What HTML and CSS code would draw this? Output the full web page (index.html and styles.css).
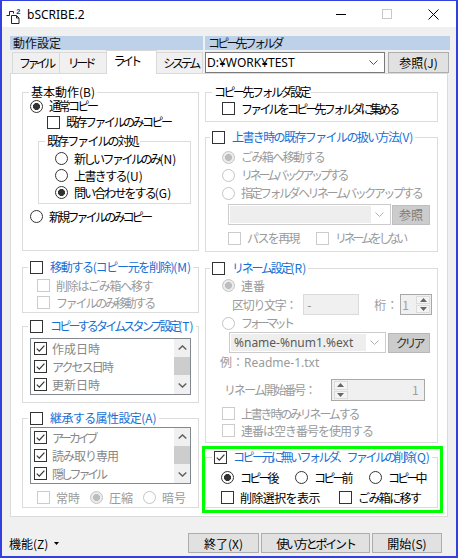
FILE: index.html
```html
<!DOCTYPE html>
<html lang="ja">
<head>
<meta charset="utf-8">
<title>bSCRIBE.2</title>
<link rel="stylesheet" href="styles.css">
</head>
<body>
<div class="window">
  <div class="titlebar">
    <svg class="appicon" width="16" height="17" viewBox="0 0 16 17">
      <path d="M0.5 8.5h3v-4h4v2" fill="none" stroke="#222" stroke-width="1"/>
      <path d="M5.5 8.5h5l2.5 2.5v5.5h-7.5z" fill="#fff" stroke="#222" stroke-width="1"/>
      <path d="M10.5 8.5v2.5h2.5" fill="none" stroke="#222" stroke-width="1"/>
      <text x="10.3" y="6.5" font-size="7.5" font-family="Liberation Sans" font-weight="bold" fill="#2323d8">2</text>
    </svg>
    <span class="title latin">bSCRIBE.2</span>
    <div class="winctl">
      <span class="wbtn"><svg width="10" height="10" viewBox="0 0 10 10"><path d="M0 5.5h10" stroke="#000"/></svg></span>
      <span class="wbtn"><svg width="10" height="10" viewBox="0 0 10 10"><rect x="0.5" y="0.5" width="9" height="9" fill="none" stroke="#c8c8c8"/></svg></span>
      <span class="wbtn"><svg width="11" height="11" viewBox="0 0 11 11"><path d="M0.5 0.5l10 10M10.5 0.5l-10 10" stroke="#000"/></svg></span>
    </div>
  </div>

  <div class="client">
    <div class="topgrid">
      <div class="hdr">動作設定</div>
      <div class="hdr s28">コピー先フォルダ</div>
      <div class="tabs">
        <span class="tab tab-file s36">ファイル</span>
        <span class="tab tab-read s36">リード</span>
        <span class="tab tab-write sel s36">ライト</span>
        <span class="tab tab-sys s32">システム</span>
      </div>
      <div class="dest">
        <div class="combo dest-combo"><span class="combo-text latin">D:¥WORK¥TEST</span><svg class="chev" width="9" height="5" viewBox="0 0 9 5"><path d="M0.5 0.5L4.5 4.5L8.5 0.5" fill="none" stroke="#555"/></svg></div>
        <span class="btn ref-btn">参照(J)</span>
      </div>
    </div>

    <div class="panel">
      <!-- LEFT COLUMN -->
      <div class="col col-left">
        <div class="grp g-basic">
          <div class="legend lg-text">基本動作(B)</div>
          <div class="row h14 mt6 ml7"><span class="rb on"></span><span class="s25">通常コピー</span></div>
          <div class="row h16 mt1 ml24"><span class="cb"></span><span class="s25">既存ファイルのみコピー</span></div>
          <div class="grp g-exist">
            <div class="legend lg-text"><span class="s19">既存ファイルの対処</span></div>
            <div class="row h17 mt8 ml16"><span class="rb"></span><span class="s25">新しいファイルのみ<span class="mn">(N)</span></span></div>
            <div class="row h17 ml16"><span class="rb"></span><span class="s16">上書きする<span class="mn">(U)</span></span></div>
            <div class="row h17 ml16"><span class="rb on"></span><span class="s19">問い合わせをする<span class="mn">(G)</span></span></div>
          </div>
          <div class="row h17 mt4 ml7"><span class="rb"></span><span class="s28">新規ファイルのみコピー</span></div>
        </div>

        <div class="grp g-move">
          <div class="legend lg-check"><span class="cb"></span><span class="blue s13">移動する(コピー元を削除)<span class="mn">(M)</span></span></div>
          <div class="row h17 mt9 ml14 dis"><span class="cb dis"></span><span class="s13">削除はごみ箱へ移す</span></div>
          <div class="row h17 ml14 dis"><span class="cb dis"></span><span class="s22">ファイルのみ移動する</span></div>
        </div>

        <div class="grp g-stamp">
          <div class="legend lg-check"><span class="cb"></span><span class="blue s28">コピーするタイムスタンプ設定<span class="mn">(T)</span></span></div>
          <div class="listbox lb-stamp">
            <div class="items">
              <div class="item"><span class="cb on"><svg width="11" height="11" viewBox="0 0 11 11"><path d="M1.8 5.6L4.3 8.1L9.4 2.6" fill="none" stroke="#333" stroke-width="1.2"/></svg></span><span>作成日時</span></div>
              <div class="item"><span class="cb on"><svg width="11" height="11" viewBox="0 0 11 11"><path d="M1.8 5.6L4.3 8.1L9.4 2.6" fill="none" stroke="#333" stroke-width="1.2"/></svg></span><span class="s19">アクセス日時</span></div>
              <div class="item"><span class="cb on"><svg width="11" height="11" viewBox="0 0 11 11"><path d="M1.8 5.6L4.3 8.1L9.4 2.6" fill="none" stroke="#333" stroke-width="1.2"/></svg></span><span>更新日時</span></div>
            </div>
            <div class="vscroll">
              <span class="sarrow"><svg width="9" height="5" viewBox="0 0 9 5"><path d="M0.7 4.5L4.5 0.9L8.3 4.5" fill="none" stroke="#606060" stroke-width="1.4"/></svg></span>
              <span class="track"><span class="thumb"></span></span>
              <span class="sarrow"><svg width="9" height="5" viewBox="0 0 9 5"><path d="M0.7 0.5L4.5 4.1L8.3 0.5" fill="none" stroke="#606060" stroke-width="1.4"/></svg></span>
            </div>
          </div>
        </div>

        <div class="grp g-attr">
          <div class="legend lg-check"><span class="cb"></span><span class="blue s06">継承する属性設定<span class="mn">(A)</span></span></div>
          <div class="listbox lb-attr">
            <div class="items">
              <div class="item"><span class="cb on"><svg width="11" height="11" viewBox="0 0 11 11"><path d="M1.8 5.6L4.3 8.1L9.4 2.6" fill="none" stroke="#333" stroke-width="1.2"/></svg></span><span class="s32">アーカイブ</span></div>
              <div class="item"><span class="cb on"><svg width="11" height="11" viewBox="0 0 11 11"><path d="M1.8 5.6L4.3 8.1L9.4 2.6" fill="none" stroke="#333" stroke-width="1.2"/></svg></span><span class="s10">読み取り専用</span></div>
              <div class="item"><span class="cb on"><svg width="11" height="11" viewBox="0 0 11 11"><path d="M1.8 5.6L4.3 8.1L9.4 2.6" fill="none" stroke="#333" stroke-width="1.2"/></svg></span><span class="s32">隠しファイル</span></div>
            </div>
            <div class="vscroll">
              <span class="sarrow"><svg width="9" height="5" viewBox="0 0 9 5"><path d="M0.7 4.5L4.5 0.9L8.3 4.5" fill="none" stroke="#606060" stroke-width="1.4"/></svg></span>
              <span class="track"><span class="thumb"></span></span>
              <span class="sarrow"><svg width="9" height="5" viewBox="0 0 9 5"><path d="M0.7 0.5L4.5 4.1L8.3 0.5" fill="none" stroke="#606060" stroke-width="1.4"/></svg></span>
            </div>
          </div>
          <div class="row h17 mt5 ml14 dis attr-opts">
            <span class="opt opt-always"><span class="cb dis"></span><span>常時</span></span>
            <span class="opt opt-comp"><span class="rb dis on"></span><span>圧縮</span></span>
            <span class="opt"><span class="rb dis"></span><span>暗号</span></span>
          </div>
        </div>
      </div>

      <!-- RIGHT COLUMN -->
      <div class="col col-right">
        <div class="grp g-dest">
          <div class="legend lg-text"><span class="s25">コピー先フォルダ設定</span></div>
          <div class="row h17 mt7 ml16"><span class="cb"></span><span class="s28">ファイルをコピー先フォルダに集める</span></div>
        </div>

        <div class="grp g-over">
          <div class="legend lg-check2"><span class="cb"></span><span class="blue s16">上書き時の既存ファイルの扱い方法<span class="mn">(V)</span></span></div>
          <div class="row h18 mt10 ml16 dis"><span class="rb dis on"></span><span class="s16">ごみ箱へ移動する</span></div>
          <div class="row h18 ml16 dis"><span class="rb dis"></span><span class="s32">リネームバックアップする</span></div>
          <div class="row h18 ml16 dis"><span class="rb dis"></span><span class="s25">指定フォルダヘリネームバックアップする</span></div>
          <div class="row h21 mt2 ml22 gap1">
            <div class="combo dis bk-combo"><span class="combo-field"></span><svg class="chev" width="9" height="5" viewBox="0 0 9 5"><path d="M0.5 0.5L4.5 4.5L8.5 0.5" fill="none" stroke="#b0b0b0"/></svg></div>
            <span class="btn dis bk-btn">参照</span>
          </div>
          <div class="row h16 mt5 ml22 dis">
            <span class="opt opt-path"><span class="cb dis"></span><span class="s16">パスを再現</span></span>
            <span class="opt"><span class="cb dis"></span><span class="s32">リネームをしない</span></span>
          </div>
        </div>

        <div class="grp g-rename">
          <div class="legend lg-check2"><span class="cb"></span><span class="blue s22">リネーム設定<span class="mn">(R)</span></span></div>
          <div class="row h17 mt8 ml16 dis"><span class="rb dis on"></span><span>連番</span></div>
          <div class="row h21 ml26 dis sep-row">
            <span class="lbl-sep s13">区切り文字：</span>
            <span class="field sep-field">-</span>
            <span class="lbl-digit">桁：</span>
            <span class="spin digit-spin"><span class="spin-val">1</span><span class="spin-btns"><span class="sb"><svg width="7" height="4" viewBox="0 0 7 4"><path d="M0 4L3.5 0L7 4z" fill="#666"/></svg></span><span class="sb"><svg width="7" height="4" viewBox="0 0 7 4"><path d="M0 0L3.5 4L7 0z" fill="#666"/></svg></span></span></span>
          </div>
          <div class="row h16 ml16 dis"><span class="rb dis"></span><span class="s36">フォーマット</span></div>
          <div class="row h21 mt1 ml23 gap2">
            <div class="combo dis fmt-combo"><span class="combo-field fmt-text latin">%name-%num1.%ext</span><svg class="chev" width="9" height="5" viewBox="0 0 9 5"><path d="M0.5 0.5L4.5 4.5L8.5 0.5" fill="none" stroke="#b0b0b0"/></svg></div>
            <span class="btn dis clear-btn s32">クリア</span>
          </div>
          <div class="row h16 mt1 ml14 dis"><span>例：<span class="latin">Readme-1.txt</span></span></div>
          <div class="row h22 mt9 ml18 dis">
            <span class="lbl-start s19">リネーム開始番号：</span>
            <span class="spin start-spin"><span class="spin-btns"><span class="sb"><svg width="7" height="4" viewBox="0 0 7 4"><path d="M0 4L3.5 0L7 4z" fill="#666"/></svg></span><span class="sb"><svg width="7" height="4" viewBox="0 0 7 4"><path d="M0 0L3.5 4L7 0z" fill="#666"/></svg></span></span><span class="spin-val right">1</span></span>
          </div>
          <div class="row h17 mt4 ml16 dis"><span class="cb dis"></span><span class="s22">上書き時のみリネームする</span></div>
          <div class="row h17 ml16 dis"><span class="cb dis"></span><span class="s10">連番は空き番号を使用する</span></div>
        </div>

        <div class="highlight">
          <div class="grp g-del">
            <div class="legend lg-text-check"><span class="cb on"><svg width="11" height="11" viewBox="0 0 11 11"><path d="M1.8 5.6L4.3 8.1L9.4 2.6" fill="none" stroke="#333" stroke-width="1.2"/></svg></span><span class="blue s25">コピー元に無いフォルダ、ファイルの削除<span class="mn">(Q)</span></span></div>
            <div class="row h17 mt11 ml15">
              <span class="opt opt-after"><span class="rb on"></span><span class="s28">コピー後</span></span>
              <span class="opt opt-before"><span class="rb"></span><span class="s28">コピー前</span></span>
              <span class="opt"><span class="rb"></span><span class="s28">コピー中</span></span>
            </div>
            <div class="row h17 mt3 ml15">
              <span class="opt opt-show"><span class="cb"></span><span class="s06">削除選択を表示</span></span>
              <span class="opt"><span class="cb"></span><span class="s16">ごみ箱に移す</span></span>
            </div>
          </div>
        </div>
      </div>
    </div>

    <div class="footer">
      <span class="func">機能(Z)<svg class="func-tri" width="5" height="3" viewBox="0 0 5 3"><path d="M0 0h5L2.5 3z" fill="#000"/></svg></span>
      <div class="buttons">
        <span class="btn fbtn b-end">終了(X)</span>
        <span class="btn fbtn b-help s22">使い方とポイント</span>
        <span class="btn fbtn b-start">開始(S)</span>
      </div>
    </div>
  </div>
</div>
</body>
</html>
```
FILE: styles.css
```css
* { box-sizing: border-box; }
html, body { margin: 0; padding: 0; }
body {
  width: 458px; height: 558px; overflow: hidden;
  font-family: "Noto Sans CJK JP", "Noto Sans", sans-serif;
  font-size: 12px; color: #000;
  background: #fff;
}
/* per-label tracking to mimic the narrow UI kana */
.s06 { letter-spacing: -0.6px; }
.s10 { letter-spacing: -1px; }
.s13 { letter-spacing: -1.3px; }
.s16 { letter-spacing: -1.6px; }
.s19 { letter-spacing: -1.9px; }
.s22 { letter-spacing: -2.2px; }
.s25 { letter-spacing: -2.5px; }
.s28 { letter-spacing: -2.8px; }
.s32 { letter-spacing: -3.2px; }
.s36 { letter-spacing: -3.6px; }
.mn { letter-spacing: 0; }
.latin { font-family: "Noto Sans", "Noto Sans CJK JP", sans-serif; letter-spacing: 0; }

.window {
  width: 458px; height: 558px;
  border: 2px solid #3340dd; border-top-width: 1px;
  background: #f0f0f0;
  display: flex; flex-direction: column;
}
.titlebar { height: 26px; flex: none; background: #fff; display: flex; align-items: center; }
.appicon { margin-left: 4px; margin-top: 2px; flex: none; }
.title { margin-left: 5px; font-size: 12px; }
.winctl { margin-left: auto; display: flex; height: 26px; }
.wbtn { width: 46px; height: 26px; display: flex; align-items: center; justify-content: center; }

.client { flex: 1; padding-top: 9px; display: flex; flex-direction: column; }
.topgrid {
  margin-left: 8px;
  display: grid; grid-template-columns: 193px 245px; column-gap: 2px;
  grid-template-rows: 14px 23px;
}
.hdr { background: #bdd1e9; line-height: 14px; height: 14px; padding-left: 3px; white-space: nowrap; color: #111; }
.tabs { display: flex; align-items: flex-end; padding-left: 2px; }
.tab {
  height: 21px; border: 1px solid #d9d9d9; border-bottom: none;
  background: #f0f0f0; line-height: 19px; padding-left: 6px; white-space: nowrap;
  margin-left: -1px; overflow: hidden;
}
.tab-file { width: 48px; margin-left: 0; }
.tab-read { width: 48px; padding-left: 8px; }
.tab-write { width: 52px; }
.tab-sys { width: 47px; padding-left: 6px; }
.tab.sel {
  height: 24px; margin-bottom: -1px; background: #fff; position: relative; z-index: 1;
  line-height: 20px; padding-left: 7px;
}
.dest { display: flex; align-items: flex-start; padding-top: 2px; }
.combo { display: flex; align-items: center; background: #fff; border: 1px solid #7a7a7a; }
.dest-combo { width: 180px; height: 21px; }
.combo-text { flex: 1; padding-left: 1px; white-space: nowrap; line-height: 19px; }
.combo .chev { margin: 0 6px 0 4px; flex: none; }
.btn {
  display: flex; align-items: center; justify-content: center;
  background: #e1e1e1; border: 1px solid #adadad; white-space: nowrap;
}
.ref-btn { width: 61px; height: 21px; margin-left: 3px; }

.panel {
  margin-left: 8px;
  width: 438px; height: 444px; flex: none;
  background: #fff; border: 1px solid #dadada;
  display: flex; gap: 6px;
  padding: 10px 0 0 11px;
}
.col { display: flex; flex-direction: column; }
.col-left { width: 177px; }
.col-right { width: 233px; }

.grp { border: 1px solid #dcdcdc; display: flex; flex-direction: column; flex: none; }
.legend {
  display: flex; align-items: center; gap: 6px;
  height: 14px; line-height: 14px; width: max-content;
  margin-top: -8px; margin-bottom: -6px;
  padding: 0 2px; background: #fff; white-space: nowrap;
}
.lg-text { margin-left: 6px; }
.lg-check { margin-left: 5px; gap: 7px; }
.lg-check2 { margin-left: 4px; gap: 7px; }
.lg-text-check { margin-left: 6px; gap: 6px; }
.blue { color: #1570d4; }

.g-basic { margin-top: 8px; height: 159px; }
.g-exist { margin: 11px 0 0 15px; width: 153px; height: 63px; }
.g-move { margin-top: 16px; height: 46px; }
.g-stamp { margin-top: 13px; height: 77px; }
.g-attr { margin-top: 15px; height: 90px; }
.lb-stamp { margin-top: 11px; }
.lb-attr { margin-top: 8px; }

.g-dest { margin-top: 8px; height: 30px; }
.g-over { margin-top: 15px; height: 115px; }
.g-rename { margin-top: 16px; height: 175px; }
.highlight {
  margin: 3px 0 0 -3px; width: 241px; height: 67px;
  border: 3px solid #00ff00; flex: none;
}
.g-del { margin-top: 8px; width: 233px; height: 51px; }

.row { display: flex; align-items: center; gap: 6px; white-space: nowrap; line-height: 14px; flex: none; }
.h14 { height: 14px; } .h16 { height: 16px; } .h17 { height: 17px; } .h18 { height: 18px; }
.h21 { height: 21px; } .h22 { height: 22px; }
.mt1 { margin-top: 1px; } .mt2 { margin-top: 2px; } .mt3 { margin-top: 3px; } .mt4 { margin-top: 4px; }
.mt5 { margin-top: 5px; } .mt6 { margin-top: 6px; } .mt7 { margin-top: 7px; } .mt8 { margin-top: 8px; } .mt9 { margin-top: 9px; }
.mt10 { margin-top: 10px; } .mt11 { margin-top: 11px; }
.ml7 { margin-left: 7px; } .ml14 { margin-left: 14px; } .ml15 { margin-left: 15px; } .ml16 { margin-left: 16px; }
.ml18 { margin-left: 18px; } .ml22 { margin-left: 22px; } .ml23 { margin-left: 23px; } .ml24 { margin-left: 24px; }
.ml26 { margin-left: 26px; }
.gap1 { gap: 1px; } .gap2 { gap: 2px; }
.dis { color: #9a9a9a; }

.opt { display: flex; align-items: center; gap: 6px; flex: none; }
.attr-opts { gap: 0; }
.opt-always { width: 53px; }
.opt-comp { width: 53px; }
.opt-path { width: 82px; }
.opt-after { width: 68px; }
.opt-before { width: 68px; }
.opt-show { width: 112px; }

.cb {
  width: 13px; height: 13px; flex: none;
  border: 1px solid #333; background: #fff;
  display: flex; align-items: center; justify-content: center;
}
.cb.dis { border-color: #cccccc; }
.rb {
  width: 13px; height: 13px; flex: none; border-radius: 50%;
  border: 1px solid #333; background: #fff;
}
.rb.on { background: radial-gradient(circle, #333 0 3.2px, #fff 3.8px); }
.rb.dis { border-color: #c4c4c4; }
.rb.dis.on { background: radial-gradient(circle, #bdbdbd 0 3.2px, #ececec 3.8px); }

.listbox {
  display: flex; width: 161px; height: 57px; margin-left: 7px; flex: none;
  border: 1px solid #828790; background: #fff;
}
.items { flex: 1; padding-left: 3px; }
.item { height: 18px; display: flex; align-items: center; gap: 5px; color: #878787; white-space: nowrap; }
.vscroll { width: 16px; background: #f0f0f0; display: flex; flex-direction: column; }
.sarrow { height: 17px; display: flex; align-items: center; justify-content: center; flex: none; }
.track { flex: 1; padding-top: 1px; }
.thumb { display: block; height: 18px; background: #cdcdcd; }

.combo.dis { border-color: #cccccc; background: #fff; }
.combo-field { flex: 1; align-self: stretch; background: #eeeeee; margin: 1px 0 1px 1px; }
.bk-combo { width: 163px; height: 21px; }
.bk-btn { width: 38px; height: 20px; background: #cccccc; border-color: #bfbfbf; color: #7a7a7a; }
.fmt-combo { width: 157px; height: 21px; }
.fmt-text { color: #5a5a5a; padding-left: 3px; line-height: 17px; }
.clear-btn { width: 42px; height: 20px; background: #cccccc; border-color: #b8b8b8; color: #333; }

.sep-row { gap: 0; }
.field { height: 21px; border: 1px solid #dadada; background: #f0f0f0; display: flex; align-items: center; }
.sep-field { width: 56px; margin-left: 7px; padding-left: 3px; color: #888; letter-spacing: 0; }
.lbl-digit { margin-left: 15px; }
.spin { display: flex; height: 21px; border: 1px solid #a8a8a8; background: #f0f0f0; }
.digit-spin { width: 32px; margin-left: 2px; }
.spin-val { flex: 1; padding-left: 1px; line-height: 19px; color: #a0a0a0; letter-spacing: 0; }
.spin-val.right { text-align: right; padding-right: 5px; }
.spin-btns { width: 14px; display: flex; flex-direction: column; margin: 1px; gap: 1px; }
.sb { flex: 1; display: flex; align-items: center; justify-content: center; background: #f4f4f4; border: 1px solid #dcdcdc; }
.start-spin { width: 94px; height: 22px; margin-left: 10px; letter-spacing: 0; }
.start-spin .spin-btns { margin-left: 2px; }

.footer { flex: 1; display: flex; align-items: flex-start; padding: 16px 14px 0 7px; }
.func { height: 20px; display: flex; align-items: center; gap: 6px; white-space: nowrap; }
.func-tri { flex: none; }
.buttons { margin-left: auto; display: flex; gap: 2px; }
.fbtn { height: 20px; }
.b-end { width: 71px; }
.b-help { width: 109px; }
.b-start { width: 70px; }
```
